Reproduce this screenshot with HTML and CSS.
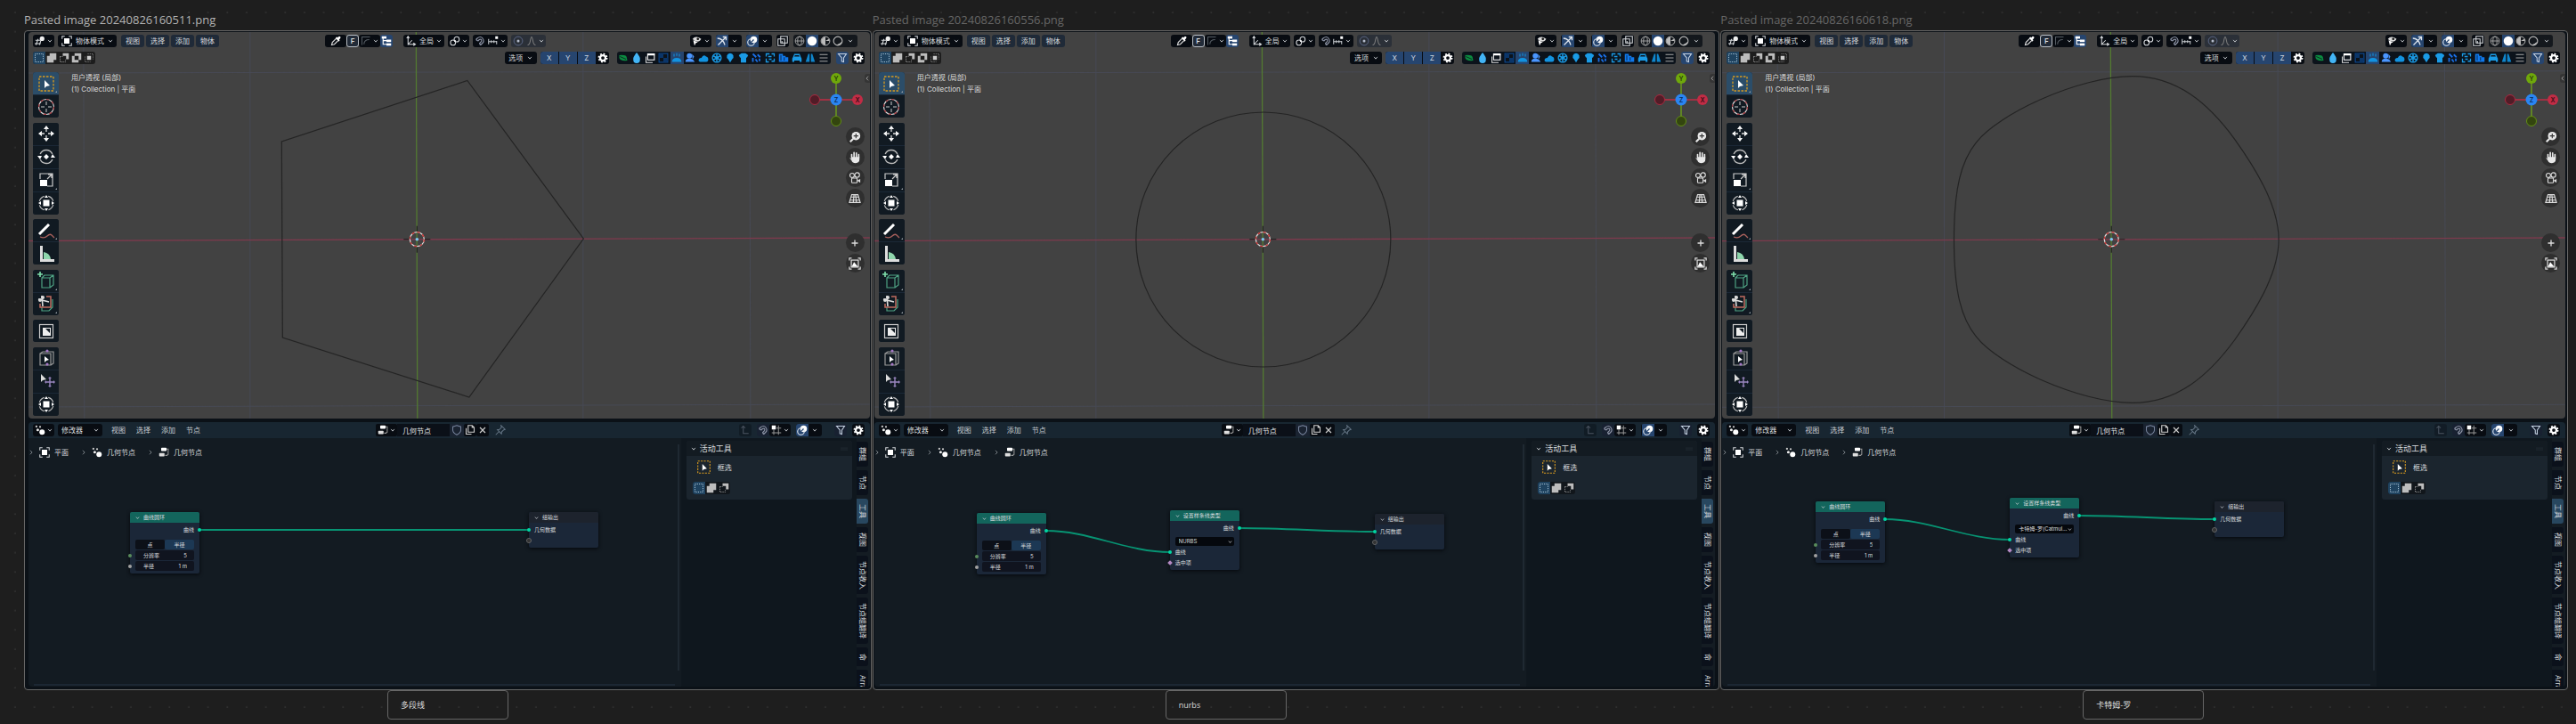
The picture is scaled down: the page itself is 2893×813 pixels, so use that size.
FILE: index.html
```html
<!DOCTYPE html>
<html lang="zh-CN">
<head>
<meta charset="utf-8">
<title>曲线类型</title>
<link rel="stylesheet" href="styles.css">
</head>
<body>
<svg class="dots" aria-hidden="true">
  <defs>
    <pattern id="dot-grid" width="65" height="65" patternUnits="userSpaceOnUse" patternTransform="translate(6 3) scale(.33333)">
      <circle cx="33" cy="33" r="2.6" fill="#353535"/>
    </pattern>
  </defs>
  <rect width="100%" height="100%" fill="url(#dot-grid)"/>
</svg>
<main class="board" id="board"></main>
<script src="app.js"></script>
</body>
</html>
```
FILE: styles.css
```css
* { box-sizing: border-box; }

body {
  margin: 0;
  min-height: 100vh;
  background: #1e1e1e;
  color: #d9dcdf;
  font: 8px/12px Inter, "Noto Sans CJK SC", sans-serif;
  overflow: hidden;
}

button, select, input {
  margin: 0;
  padding: 0;
  border: 0;
  background: none;
  color: inherit;
  font: inherit;
}
select { appearance: none; }
svg { display: block; }
.icon { width: 12px; height: 12px; flex: none; }
.icon.chev { width: 6px; height: 6px; }

.dots { position: absolute; inset: 0; width: 100%; height: 100%; }

/* board */
.board {
  position: relative;
  display: grid;
  grid-template-columns: repeat(3, minmax(0, 1fr));
  gap: 1px;
  padding: 12px 9px 0 27px;
}
.shot { display: flex; flex-direction: column; align-items: flex-start; }
.shot-title {
  margin: 0;
  height: 22px;
  color: #666;
  font: 13px/20px "Open Sans", sans-serif;
}
.shot-title.active { color: #b3b3b3; }
.frame {
  width: 100%;
  display: flex;
  flex-direction: column;
  gap: 4px;
  padding: 1px 2px 3px 1px;
  border: 1px solid #666;
  border-radius: 4px;
  background: #0b1117;
  overflow: hidden;
}
.frame.first { padding-left: 4px; padding-right: 1px; }
.frame.second { padding-right: 4px; }
.caption {
  width: 136px;
  height: 33px;
  padding: 0 14px;
  border: 1px solid #666;
  border-radius: 4px;
  color: #dadada;
  font: 9px/32px "Open Sans", "Noto Sans CJK SC", sans-serif;
}
.caption.first { margin-left: 408px; }
.caption.second { margin-left: 329px; }
.caption.third { margin-left: 407px; }

/* 3D viewport */
.viewport {
  position: relative;
  padding: 2px 0 3px;
  border-radius: 4px;
  background: #424242;
  overflow: hidden;
}
.scene { position: absolute; inset: 0; width: 100%; height: 100%; }
.bar { position: relative; display: flex; align-items: center; height: 15px; }
.bar + .bar { margin-top: 4px; }
.top-bar { padding: 0 14px 0 5px; }
.tool-bar { padding: 0 6px 0 5px; justify-content: space-between; }
.lead { display: flex; gap: 4px; flex: 0 0 328px; }
.middle { display: flex; gap: 4px; }
.trail { display: flex; gap: 5px; margin-left: auto; }
.menus { display: flex; gap: 2px; margin-left: 1px; }
.menu { width: 26px; height: 14px; border-radius: 3px; background: #1f2a38; }

.pill {
  display: flex;
  align-items: center;
  justify-content: space-evenly;
  height: 14px;
  border-radius: 3px;
  background: #080c12;
  overflow: hidden;
}
.w14 { width: 14px; }
.w24 { width: 24px; }
.w29 { width: 29px; }
.w36 { width: 36px; }
.w39 { width: 39px; }
.w46 { width: 46px; }
.w66 { width: 66px; }
.w50 { width: 50px; }
.pill.dim { background: #2b3038; color: #777; }
.on { background: #26456f; }
.cell { display: flex; align-items: center; justify-content: center; width: 14px; height: 14px; }
.pick { display: flex; align-items: center; justify-content: space-between; position: relative; }
.pick select { flex: 1; min-width: 0; height: 14px; line-height: 14px; }
.mode-pick { padding: 0 4px; gap: 4px; }
.set { display: flex; }
.set .pill { border-radius: 3px; }
.set .key { border: 1px solid #b9bec4; background: #222b38; font-weight: 600; }
.shade { width: 72px; background: #14181d; }
.gap-right { margin-right: 8px; }

.modes { display: flex; height: 14px; border-radius: 3px; background: #1d1d1d; overflow: hidden; }
.modes .cell.on { background: #1f4360; }
.axes { display: flex; height: 14px; border-radius: 3px; background: #080c12; overflow: hidden; }
.axes .axis { width: 20px; margin-right: 1px; background: #26456f; color: #d0d8e0; }
.filters { display: flex; height: 14px; border-radius: 3px; background: #0c131b; overflow: hidden; }
.filters .cell { width: 15px; }
.tool-group-right { display: flex; gap: 4px; align-items: center; }
.tool-group-right .filters { margin: 0 2px 0 5px; }

.stage { position: relative; display: flex; align-items: flex-start; min-height: 395px; padding: 9px 0 0 5px; }
.tools { display: flex; flex-direction: column; align-self: stretch; justify-content: space-between; }
.tool-set {
  display: flex;
  flex-direction: column;
  gap: 1px;
  border-radius: 3px;
  background: #1b2836;
  overflow: hidden;
}
.tool {
  position: relative;
  display: grid;
  place-items: center;
  width: 29px;
  height: 25px;
  background: #111a22;
}
.tool.on { background: #2b4d69; }
.tool .icon { width: 20px; height: 20px; }
.tool.more::after {
  content: "";
  position: absolute;
  right: 2px;
  bottom: 2px;
  border: 1px solid #9aa2a9;
  border-left-color: transparent;
  border-top-color: transparent;
}
.view-info {
  margin: 0 0 0 14px;
  color: #e2e2e2;
  line-height: 13px;
  text-shadow: 0 0 1px #222;
}
.view-info span { display: block; }
.gizmo { width: 62px; height: 62px; margin-right: 1px; }
.nav {
  display: flex;
  flex-direction: column;
  align-items: flex-end;
  margin-left: auto;
  padding-right: 6px;
}
.nav-set { display: flex; flex-direction: column; gap: 2px; }
.nav-set + .nav-set { margin-top: 29px; }
.round {
  display: grid;
  place-items: center;
  width: 21px;
  height: 21px;
  border-radius: 50%;
  background: #2f2f2f;
}
.round .icon { width: 14px; height: 14px; }
.collapse {
  position: absolute;
  top: 11px;
  right: 0;
  width: 6px;
  height: 10px;
  border-radius: 3px 0 0 3px;
  background: #353535;
}
.collapse .icon { width: 6px; height: 8px; }

/* node editor */
.editor { border-radius: 4px; background: #131b22; overflow: hidden; }
.editor-bar { display: flex; align-items: center; height: 18px; padding: 0 6px 0 5px; background: #182631; }
.editor-bar .trail { gap: 6px; }
.editor-lead { display: flex; align-items: center; gap: 4px; flex: 0 0 385px; }
.editor-menus { display: flex; gap: 2px; margin-left: 1px; }
.editor-menus button { width: 26px; height: 14px; color: #c8cdd2; }
.datablock { display: flex; }
.datablock .pill { border-radius: 2px; }
.datablock input { width: 59px; height: 14px; padding-left: 6px; background: #0b1018; color: #e4e6e8; }
.datablock .soft { width: 16px; background: #1a2331; }
.faint { opacity: .35; }
.bare { background: #182131; }
.filter { margin-left: 8px; }
.pin { margin-left: 6px; background: none; }
.editor-body { display: flex; height: 279px; }
.graph { position: relative; flex: 1; min-width: 0; }
.crumbs { position: relative; display: flex; align-items: center; gap: 6px; height: 32px; padding: 0; }
.crumbs .chev { opacity: .8; }
.crumbs .crumb { display: flex; align-items: center; gap: 5px; margin-right: 8px; color: #d5d8db; text-decoration: none; }
.links { position: absolute; inset: 0; width: 100%; height: 100%; }
.scroll-y { position: absolute; right: 2px; top: 7px; bottom: 18px; width: 2px; background: #1f2932; }
.scroll-x { position: absolute; left: 6px; right: 7px; bottom: 1px; height: 2px; background: #1c2733; }

.node {
  position: absolute;
  width: 78px;
  border-radius: 2px;
  background: #1b2738;
  box-shadow: 0 1px 4px #05080c;
  font-size: 6px;
  line-height: 12px;
}
.node-head {
  display: flex;
  align-items: center;
  gap: 4px;
  height: 12px;
  margin: 0 0 2px;
  padding-left: 6px;
  border-radius: 2px 2px 0 0;
  background: #13655c;
  font-size: 6px;
  font-weight: 400;
}
.node-head .chev { width: 5px; height: 5px; }
.output .node-head { background: #1d232d; }
.row { position: relative; height: 12px; padding: 0 6px; }
.row.right { text-align: right; }
.socket {
  position: absolute;
  top: 4px;
  width: 4px;
  height: 4px;
  border-radius: 50%;
  background: #00d6a3;
}
.socket.in { left: -2px; }
.socket.out { right: -2px; }
.socket.int { background: #598c5c; }
.socket.float { background: #a1a1a1; }
.socket.bool { background: #b48ac4; border-radius: 0; transform: rotate(45deg); }
.socket.empty { background: #333; outline: 1px solid #666; }
.fields { display: flex; flex-direction: column; gap: 1px; padding: 5px 6px 3px; }
.segment { display: flex; }
.segment button { flex: 1; height: 11px; background: #0c1018; border-radius: 2px; }
.segment .on { background: #1c3854; }
.field {
  position: relative;
  display: flex;
  justify-content: space-between;
  height: 11px;
  padding: 0 8px 0 9px;
  border-radius: 2px;
  background: #10141f;
  line-height: 11px;
}
.field input { width: 20px; text-align: right; }
.field .socket.in { left: -8px; }
.choice {
  display: flex;
  align-items: center;
  height: 10px;
  margin: 4px 6px 1px;
  padding: 0 2px 0 4px;
  border-radius: 2px;
  background: #05080d;
}
.choice select { flex: 1; min-width: 0; height: 10px; line-height: 10px; text-overflow: ellipsis; }
.choice .chev { width: 5px; height: 5px; }
.node-end { height: 2px; }

.sidebar { display: flex; width: 212px; background: #0f171e; }
.panel { flex: 1; margin: 3px 5px 0 6px; }
.panel-card { border-radius: 3px; background: #1b252e; overflow: hidden; }
.panel-head {
  display: flex;
  align-items: center;
  gap: 4px;
  height: 17px;
  margin: 0;
  padding: 0 5px;
  background: #131b22;
  font-size: 9px;
  font-weight: 400;
}
.panel-head .grip { width: 8px; margin-left: auto; }
.panel-body { padding: 4px 7px 6px; }
.active-tool { display: flex; align-items: center; gap: 7px; padding-left: 4px; }
.active-tool .icon { width: 17px; height: 17px; }
.panel-body .modes { width: 42px; margin-top: 8px; background: #11161b; }
.tabs { display: flex; flex-direction: column; gap: 4px; width: 15px; padding: 4px 2px 0 0; background: #141c23; overflow: hidden; }
.tab {
  flex: none;
  width: 13px;
  height: 28px;
  border-radius: 0 3px 3px 0;
  background: #0b111b;
  line-height: 13px;
  writing-mode: vertical-rl;
  text-orientation: sideways;
  text-align: center;
}
.tab.on { background: #28475f; }
.tab.h43 { height: 43px; }
.tab.h52 { height: 52px; }
.tab.h21 { height: 21px; }
```
FILE: app.js
```js
const W = 'fill="none" stroke="#d5d8db" stroke-width="1.4"';
const ICONS = {
  chev: '<path d="M3 5l5 6 5-6" fill="none" stroke="#c9cdd1" stroke-width="2.4"/>',
  next: '<path d="M5 2l6 6-6 6" fill="none" stroke="#c9cdd1" stroke-width="2"/>',
  back: '<path d="M11 2L5 8l6 6" fill="none" stroke="#bbb" stroke-width="2"/>',
  view3d: `<path d="M1 7h8M0 12h9M5 5l-3 9M9 8l-2 6" ${W}/><circle cx="11" cy="4.500" r="3.500" fill="#eee"/>`,
  object: `<path d="M1 5V1h4M11 1h4v4M15 11v4h-4M5 15H1v-4" ${W}/><rect x="4" y="4" width="8" height="8" fill="#fff"/>`,
  dropper: '<path d="M2 14l1-4 6-6 3 3-6 6z" fill="none" stroke="#ddd" stroke-width="1.5"/><path d="M8 3l2-1 1 1 2-2q3 0 2 3l-2 2 1 1-1 2z" fill="#fff"/>',
  corner: '<path d="M2 14V2h12M5 13q0-7 8-7" fill="none" stroke="#555c63" stroke-width="1.4"/>',
  tree: '<path d="M3 4v9h5M3 7.500h5" fill="none" stroke="#fff" stroke-width="1.500"/><rect x="1" y="1" width="7" height="3.500" fill="#fff"/><rect x="8" y="6" width="7" height="3.500" fill="#fff"/><rect x="8" y="11.500" width="7" height="3.500" fill="#fff"/>',
  orient: `<path d="M3 14V2M1 4l2-3 2 3M3 13h10M11 11l3 2-3 2M3 13l6-6" ${W}/>`,
  link: `<circle cx="5" cy="10.500" r="3.800" ${W}/><circle cx="10.500" cy="5.500" r="3.800" ${W}/><circle cx="8" cy="8" r="1.200" fill="#fff"/>`,
  magnet: '<path d="M2 6l2-2q5-4 8 0t0 7l-3 3M5 8l2-2q2-1 3 0t0 3l-3 3M9 14l-2-2M2 6l3 2" fill="none" stroke="#8c93a5" stroke-width="1.500"/>',
  ruler: '<path d="M1 5v8M5 7v4M9 7v4M1 9h12M13 8v5" fill="none" stroke="#c9cdd1" stroke-width="1.400"/><rect x="11" y="1" width="4" height="4" fill="#fff"/>',
  prop: '<circle cx="8" cy="8" r="6.500" fill="none" stroke="#5b6785" stroke-width="1.300"/><circle cx="8" cy="8" r="2" fill="#b5bccb"/>',
  bell: '<path d="M2 14q3 0 4-6t2-6 2 6 4 6" fill="none" stroke="#7d7d7d" stroke-width="1.400"/>',
  eye: '<path d="M1 5q5-6 13 0-2 4-6 4T1 5z" fill="#ddd"/><circle cx="9" cy="5" r="1.800" fill="#111"/><path d="M2 7l7 3-3 1-2 4z" fill="#fff"/>',
  gizmo: '<path d="M2 14L13 3M9 2h5v5M1 4q8 0 11 10" fill="none" stroke="#dfe6ee" stroke-width="1.700"/>',
  overlay: '<circle cx="10" cy="6" r="5" fill="#fff"/><circle cx="6" cy="10" r="5" fill="none" stroke="#dfe6ee" stroke-width="1.500"/><path d="M6 10l4-4" stroke="#26456f" stroke-width="1.500"/>',
  xray: `<path d="M5 1h10v10H5zM1 5h10v10H1zM7 8v4" ${W}/>`,
  wire: '<g fill="none" stroke="#aaa" stroke-width="1.200"><circle cx="8" cy="8" r="6.500"/><ellipse cx="8" cy="8" rx="3" ry="6.500"/><path d="M1.500 8h13"/></g>',
  solid: '<circle cx="8" cy="8" r="7" fill="#fff"/>',
  matp: '<circle cx="8" cy="8" r="6.500" fill="none" stroke="#bbb" stroke-width="1.300"/><path d="M8 2a6 6 0 0 0 0 12V8h6a6 6 0 0 0-1-3L8 8z" fill="#bbb"/>',
  rend: '<circle cx="8" cy="8" r="6.500" fill="none" stroke="#bbb" stroke-width="1.500"/><path d="M13 10q-1 4-6 4 5-2 6-4z" fill="#ccc" stroke="#bbb"/>',
  mnew: '<rect x="2" y="2" width="12" height="12" fill="none" stroke="#a9c4d8" stroke-width="1.300" stroke-dasharray="1.500 1.500"/>',
  madd: '<path d="M5 1h10v10h-4v4H1V5h4z" fill="#bdbdbd"/>',
  msub: '<path d="M6 1h9v9h-4V5H6z" fill="#bdbdbd"/><path d="M2 6v8h8v-3M2 6h4" fill="none" stroke="#aaa" stroke-width="1.200" stroke-dasharray="1.500 1.500"/>',
  minv: '<path d="M5 1h10v10h-4v4H1V5h4z" fill="#bdbdbd"/><rect x="5" y="5" width="6" height="6" fill="#1d1d1d"/>',
  mand: '<path d="M6 2h8v8M2 6v8h8" fill="none" stroke="#888" stroke-width="1.200" stroke-dasharray="1.500 1.500"/><rect x="5" y="5" width="6" height="6" fill="#ccc"/>',
  gear: '<circle cx="8" cy="8" r="4" fill="none" stroke="#fff" stroke-width="3"/><circle cx="8" cy="8" r="6" fill="none" stroke="#fff" stroke-width="2.600" stroke-dasharray="2.400 2.312"/>',
  funnel: '<path d="M2 2h12L10 8v6l-3-1V8z" fill="none" stroke="#c7d4e4" stroke-width="1.400"/>',
  leaf: '<path d="M2 4q10-1 11 3l1 5q-11 1-12-4z" fill="#0b8a40"/><path d="M3 6l9 4" stroke="#0c131b"/>',
  drop: '<path d="M8 0q6 7 5 11a5 5 0 0 1-10 0Q2 7 8 0z" fill="#42b4f5"/>',
  layers: '<path d="M2 6v9h10" fill="none" stroke="#ddd" stroke-width="1.400"/><rect x="4.500" y="2" width="10" height="9" fill="none" stroke="#fff" stroke-width="1.400"/><path d="M4 3h11" stroke="#fff" stroke-width="2.500"/>',
  check: '<rect x="1.500" y="1.500" width="13" height="13" fill="none" stroke="#0a4c9a" stroke-width="1.400"/><path d="M2 2h6v6H2zM8 8h6v6H8z" fill="#0b3568"/>',
  steam: '<path d="M1 14q0-6 7-6t7 6z" fill="#1293e0"/><path d="M4 2v4M8 1v4M12 2v4" stroke="#1293e0" stroke-width="1.400"/>',
  person: '<circle cx="7" cy="5" r="4" fill="#4a96ff"/><path d="M1 14q0-5 6-5t6 5zM11 2l3 4-2 4 3 4h-3" fill="#4a96ff"/>',
  cloud: '<path d="M1 13q-1-5 4-5 3-6 7-2 4 1 3 6-1 2-3 2H3z" fill="#1293e0"/>',
  reel: '<circle cx="8" cy="8" r="6.500" fill="none" stroke="#1a9be6" stroke-width="1.800"/><path d="M8 2v12M3 5l10 6M3 11l10-6" stroke="#1a9be6" stroke-width="2"/>',
  bulb: '<path d="M8 1a5 5 0 0 1 3 9l-3 5-3-5a5 5 0 0 1 3-9z" fill="#1a9be6"/>',
  shirt: '<path d="M1 4l4-3h6l4 3-2 4-1-1v8H4V7L3 8z" fill="#1a9be6"/>',
  bits: '<path d="M2 2l5 5M9 3l4 4M2 8v6M6 10l3 4M12 9v4" stroke="#1a6fe6" stroke-width="2.400"/>',
  frags: '<path d="M2 6V2h5M10 2h4v4M14 9v4h-4M6 14H2V9M5 6h5M6 10h4" fill="none" stroke="#1a9be6" stroke-width="1.700"/>',
  bldg: '<path d="M1 14V2h6v3h4v2h4v7z" fill="#0f78ea"/><path d="M4 4v8M9 7v5" stroke="#0c131b"/>',
  car: '<path d="M2 7l2-5h8l2 5 1 2v5h-3v-2H4v2H1V9z" fill="#1a9be6"/><path d="M4 6l1-2h6l1 2z" fill="#0c131b"/>',
  road: '<path d="M5 2h2v12H1zM9 2h2l4 12H9z" fill="#0f86cc"/>',
  lines: '<path d="M2 3h12M2 8h12M2 13h12" stroke="#aaa" stroke-width="1.300"/>',
  selbox: '<rect x="2" y="2" width="16" height="16" fill="none" stroke="#d79a20" stroke-width="1.300" stroke-dasharray="2.500 1.500"/><path d="M8 6v9l2-2 4-1z" fill="#fff"/>',
  cursor: '<circle cx="10" cy="10" r="8.500" fill="none" stroke="#ddd" stroke-width="1.200"/><circle cx="10" cy="10" r="8.500" fill="none" stroke="#a5393e" stroke-width="1.200" stroke-dasharray="3.300 3.300"/><path d="M10 4v4M10 12v4M4 10h4M12 10h4" stroke="#ccc"/>',
  move: '<path d="M10 1l3 4H7zM10 19l3-4H7zM1 10l4-3v6zM19 10l-4-3v6z" fill="#fff"/><path d="M10 4v4M10 12v4M4 10h4M12 10h4" stroke="#ddd" stroke-width="1.300"/>',
  rotate: '<circle cx="10" cy="10" r="7.500" fill="none" stroke="#bbb" stroke-width="1.400" stroke-dasharray="17 6.560" stroke-dashoffset="-3"/><path d="M10 7l3 3-3 3-3-3zM0 9h5l-2 4zM20 11h-5l2-4z" fill="#fff"/>',
  scale: '<path d="M3 9V3h14v14h-6M11 9l5-5M12 4h4v4" fill="none" stroke="#ccc" stroke-width="1.200"/><rect x="3" y="10" width="8" height="7" fill="#fff"/>',
  transform: '<circle cx="10" cy="10" r="8" fill="none" stroke="#bbb" stroke-width="1.200" stroke-dasharray="8 4.560" stroke-dashoffset="-2"/><rect x="6.500" y="6.500" width="7" height="7" fill="#fff"/><path d="M10 1l2 3H8zM10 19l2-3H8zM1 10l3-2v4zM19 10l-3-2v4z" fill="#fff"/>',
  pencil: '<path d="M2 14l11-11" stroke="#fff" stroke-width="3"/><path d="M3 17q5 2 8-1t5-1 3 3" fill="none" stroke="#a8605c" stroke-width="1.300"/>',
  measure: '<path d="M3 1h3v15h13v3H3z" fill="#ddd"/><path d="M7 8q7 1 8 8H7z" fill="#8fd6ac"/>',
  addcube: '<path d="M5 7h9v11H5zM5 7l3-3h10v11l-4 3M14 7l4-3" fill="none" stroke="#4fa384" stroke-width="1.200"/><path d="M3 0v6M0 3h6" stroke="#7fe0ac" stroke-width="1.600"/>',
  cutcube: '<path d="M17 5v9l-4 4H5v-4" fill="none" stroke="#4fa384" stroke-width="1.200"/><path d="M10 2h5v12H3v-4" fill="none" stroke="#c06c60" stroke-width="1.500"/><path d="M5 1l1 12M1 5l12 3" stroke="#ddd" stroke-width="1.600"/><circle cx="3" cy="6" r="2" fill="#ddd"/><circle cx="6" cy="3" r="2" fill="#ddd"/>',
  mirror: '<rect x="2.500" y="2.500" width="15" height="15" fill="none" stroke="#ccc" stroke-width="1.200"/><path d="M6 6h9v9H6z" fill="#eee"/><path d="M9 7h5v5z" fill="#111a22"/>',
  lattice: '<path d="M3 5h12v13H3zM3 5l3-2h12v13l-3 2" fill="none" stroke="#999" stroke-width="1.200"/><path d="M8 8v7l2-2 3-1z" fill="#fff"/><circle cx="11" cy="2" r="1.600" fill="#a678c8"/><circle cx="11" cy="17" r="1.600" fill="#a678c8"/>',
  tweak: '<path d="M4 2v9l2-2 4-1z" fill="#ddd"/><path d="M14 6v9M9 11h10" stroke="#9a86c0" stroke-width="1.400"/><path d="M14 5l2 2h-4zM14 17l2-2h-4zM8 11l2-2v4zM20 11l-2-2v4z" fill="#9a86c0"/>',
  zoom: '<circle cx="9.500" cy="6.500" r="5.500" fill="#e8e8e8"/><path d="M6 10l-4 4" stroke="#e8e8e8" stroke-width="2.400"/><path d="M9.500 3.500v6M6.500 6.500h6" stroke="#333" stroke-width="1.300"/>',
  hand: '<path d="M4 9V4M7 8V1.500M10 8V2M13 8V4" stroke="#e8e8e8" stroke-width="1.900" stroke-linecap="round"/><path d="M1 8l3 2V7h10v3q0 5-5 5-4 0-5-3z" fill="#e8e8e8"/>',
  camera: '<circle cx="4.500" cy="4.500" r="2.800" fill="none" stroke="#ddd" stroke-width="1.300"/><circle cx="11" cy="4" r="3" fill="none" stroke="#ddd" stroke-width="1.300"/><rect x="4" y="8" width="7" height="6" rx="1" fill="none" stroke="#ddd" stroke-width="1.300"/><path d="M11 11l4-2v5z" fill="#ddd"/>',
  persp: '<path d="M4 3h8l3 10H1zM3 6h10M2 10h12M7 3L6 13M9 3l1 10" fill="none" stroke="#ddd" stroke-width="1.300"/>',
  plus: '<path d="M8 4v8M4 8h8" stroke="#ddd" stroke-width="1.500"/>',
  frame: '<path d="M1 4V1h3M12 1h3v3M15 12v3h-3M4 15H1v-3" fill="none" stroke="#ddd" stroke-width="1.400"/><rect x="3.500" y="3.500" width="9" height="9" fill="none" stroke="#ddd" stroke-width="1.400"/><path d="M4 12l3-6 5 6z" fill="#fff"/>',
  geo: '<circle cx="11" cy="11" r="4" fill="#fff"/><circle cx="2.500" cy="2.500" r="1.500" fill="#ccc"/><circle cx="8" cy="3" r="1.500" fill="#ccc"/><circle cx="4.500" cy="7.500" r="2" fill="#eee"/>',
  group: '<rect x="4" y="1" width="8" height="5" rx="1" fill="#fff"/><rect x="1" y="9" width="8" height="5" rx="1" fill="#ddd"/><path d="M12 3h2.500v8l-2 1.500H10" fill="none" stroke="#999" stroke-width="1.400"/>',
  shield: '<path d="M8 1l6 2v5q0 4-6 7-6-3-6-7V3z" fill="none" stroke="#76839b" stroke-width="1.400"/>',
  copy: '<path d="M5 1h6l3 3v7H5zM2 5v9h8M11 1v3h3" fill="none" stroke="#ccc" stroke-width="1.500"/>',
  close: '<path d="M4 4l8 8M12 4l-8 8" stroke="#ccc" stroke-width="1.600"/>',
  pin: '<path d="M9 1l6 6-2 .500-3 3-.500 3-6-6 3-.500 3-3zM6 10l-5 5" fill="none" stroke="#657585" stroke-width="1.400"/>',
  up: '<path d="M5 2v11h8M2 5l3-3 3 3" fill="none" stroke="#aab" stroke-width="1.400"/>',
  grid: '<path d="M4 7v8M11 1v14M1 12h14M8 5h7" fill="none" stroke="#999" stroke-width="1.300"/><rect x="1" y="1" width="6" height="6" fill="#fff"/>',
  grip: '<g fill="#36424c"><circle cx="2" cy="6" r="1"/><circle cx="6" cy="6" r="1"/><circle cx="10" cy="6" r="1"/><circle cx="14" cy="6" r="1"/><circle cx="2" cy="10" r="1"/><circle cx="6" cy="10" r="1"/><circle cx="10" cy="10" r="1"/><circle cx="14" cy="10" r="1"/></g>'
};
const BIG = ['selbox', 'cursor', 'move', 'rotate', 'scale', 'transform', 'pencil', 'measure', 'addcube', 'cutcube', 'mirror', 'lattice', 'tweak'];

const icon = (name, cls = '') => {
  const size = BIG.includes(name) ? 20 : 16;
  return `<svg class="icon ${cls}" viewBox="0 0 ${size} ${size}" aria-hidden="true">${ICONS[name]}</svg>`;
};
const chev = () => icon('chev', 'chev');
const pill = (cls, ...names) =>
  `<button class="pill ${cls}" aria-label="${names[0]}">${names.map(n => (n === 'chev' ? chev() : icon(n))).join('')}</button>`;
const cell = (name, cls = '') => `<button class="cell ${cls}" aria-label="${name}">${icon(name)}</button>`;
const menu = labels => labels.map(l => `<button class="menu">${l}</button>`).join('');
const toolSet = (...names) => `<div class="tool-set">${names.map(n => {
  const [name, flag] = n.split(':');
  return `<button class="tool ${name === 'selbox' ? 'on' : ''} ${flag || ''}" aria-label="${name}">${icon(name)}</button>`;
}).join('')}</div>`;

const scene = shape => `
<svg class="scene" viewBox="0 0 945 434" preserveAspectRatio="xMidYMid slice" aria-hidden="true">
  <path d="M62 0l1 434M249 0v434M623 0v434M810 0l1 434M0 46l945-2M0 421l945-3" stroke="#474a55" fill="none"/>
  <path d="M0 234.500L945 231" stroke="#7d3a4d" stroke-width="1.300"/>
  <path d="M435.500 0L437 434" stroke="#537a31" stroke-width="1.300"/>
  <g fill="none" stroke="#242424" stroke-width="1.200">${shape}</g>
  <g transform="translate(436.500 232.700)">
    <path d="M-15 0h8M7 0h8M0-15v8M0 7v8" stroke="#222" stroke-width="1.200"/>
    <circle r="8" fill="none" stroke="#ddd" stroke-width="1.300"/>
    <circle r="8" fill="none" stroke="#c83232" stroke-width="1.300" stroke-dasharray="3.140 3.140"/>
    <circle r="1.800" fill="#7cc8f0"/>
  </g>
</svg>`;

const gizmo = `
<svg class="gizmo" viewBox="0 0 62 62" role="img" aria-label="视图方向" font-size="7" font-weight="600" text-anchor="middle">
  <path d="M31 7v48" stroke="#6b9b1c" stroke-width="1.500"/><path d="M7 31h48" stroke="#c12c45" stroke-width="1.500"/>
  <circle cx="31" cy="7" r="6" fill="#6fa80b"/><circle cx="31" cy="55" r="5.500" fill="#33450f" stroke="#628d16"/>
  <circle cx="7" cy="31" r="5.500" fill="#511c27" stroke="#a92a40"/><circle cx="55" cy="31" r="6" fill="#c12c45"/>
  <circle cx="31" cy="31" r="6.500" fill="#2a85f2"/>
  <text x="31" y="9.500" fill="#26390b">Y</text><text x="55" y="33.500" fill="#3c0f18">X</text><text x="31" y="33.500" fill="#0c2b52">Z</text>
</svg>`;

const viewport = shape => `
<section class="viewport">
  ${scene(shape)}
  <header class="bar top-bar">
    <div class="lead">
      ${pill('w24', 'view3d', 'chev')}
      <div class="pill pick mode-pick w66">${icon('object')}<select aria-label="模式"><option>物体模式</option></select>${chev()}</div>
      <div class="menus">${menu(['视图', '选择', '添加', '物体'])}</div>
    </div>
    <div class="middle">
      <div class="set gap-right">${pill('w24', 'dropper')}<button class="pill w14 key">F</button>${pill('w24', 'corner', 'chev')}${pill('w14 on', 'tree')}</div>
      <button class="pill w46">${icon('orient')}<span>全局</span>${chev()}</button>
      ${pill('w24', 'link', 'chev')}
      ${pill('w39', 'magnet', 'ruler', 'chev')}
      ${pill('w39 dim', 'prop', 'bell', 'chev')}
    </div>
    <div class="trail">
      ${pill('w24', 'eye', 'chev')}
      <div class="pill w29">${cell('gizmo', 'on')}<button class="cell" aria-label="坐标轴选项">${chev()}</button></div>
      <div class="pill w29">${cell('overlay', 'on')}<button class="cell" aria-label="叠加层选项">${chev()}</button></div>
      ${pill('w14', 'xray')}
      <div class="pill shade">${cell('wire')}${cell('solid', 'on')}${cell('matp')}${cell('rend')}<button class="cell" aria-label="着色选项">${chev()}</button></div>
    </div>
  </header>
  <div class="bar tool-bar">
    <div class="modes">${cell('mnew', 'on')}${['madd', 'msub', 'minv', 'mand'].map(n => cell(n)).join('')}</div>
    <div class="tool-group-right">
      <button class="pill w36"><span>选项</span>${chev()}</button>
      <div class="axes"><button class="axis">X</button><button class="axis">Y</button><button class="axis">Z</button>${cell('gear')}</div>
      <div class="filters">${['leaf', 'drop', 'layers', 'check', 'steam', 'person', 'cloud', 'reel', 'bulb', 'shirt', 'bits', 'frags', 'bldg', 'car', 'road', 'lines'].map(n => cell(n, n === 'steam' ? 'on' : '')).join('')}</div>
      ${pill('w14 on', 'funnel')}
      ${pill('w14', 'gear')}
    </div>
  </div>
  <div class="stage">
    <div class="tools">
      ${toolSet('selbox:more', 'cursor')}
      ${toolSet('move', 'rotate', 'scale:more', 'transform')}
      ${toolSet('pencil:more', 'measure')}
      ${toolSet('addcube:more', 'cutcube:more')}
      ${toolSet('mirror')}
      ${toolSet('lattice', 'tweak', 'transform')}
    </div>
    <p class="view-info"><span>用户透视 (局部)</span><span>(1) Collection | 平面</span></p>
    <div class="nav">
      ${gizmo}
      <div class="nav-set">${['zoom', 'hand', 'camera', 'persp'].map(n => `<button class="round" aria-label="${n}">${icon(n)}</button>`).join('')}</div>
      <div class="nav-set">${['plus', 'frame'].map(n => `<button class="round" aria-label="${n}">${icon(n)}</button>`).join('')}</div>
    </div>
    <button class="collapse" aria-label="侧栏">${icon('back')}</button>
  </div>
</section>`;

const at = ([x, y]) => `style="left:${x}px;top:${y}px"`;
const head = title => `<h3 class="node-head">${chev()}${title}</h3>`;

const circleNode = pos => `
<article class="node" ${at(pos)}>${head('曲线圆环')}
  <div class="row right">曲线<i class="socket out"></i></div>
  <div class="fields">
    <div class="segment"><button>点</button><button class="on">半径</button></div>
    <label class="field"><i class="socket in int"></i>分辨率<input value="5"></label>
    <label class="field"><i class="socket in float"></i>半径<input value="1 m"></label>
  </div>
</article>`;

const typeNode = (pos, type) => `
<article class="node" ${at(pos)}>${head('设置样条线类型')}
  <div class="row right">曲线<i class="socket out"></i></div>
  <div class="choice"><select aria-label="样条线类型"><option>${type}</option></select>${chev()}</div>
  <div class="row"><i class="socket in"></i>曲线</div>
  <div class="row"><i class="socket in bool"></i>选中项</div>
  <div class="node-end"></div>
</article>`;

const outputNode = pos => `
<article class="node output" ${at(pos)}>${head('组输出')}
  <div class="row"><i class="socket in"></i>几何数据</div>
  <div class="row"><i class="socket in empty"></i></div>
  <div class="node-end"></div>
</article>`;

const wire = (x1, y1, x2, y2) => {
  const d = (x2 - x1) * 0.35;
  return `<path d="M${x1} ${y1}C${x1 + d} ${y1} ${x2 - d} ${y2} ${x2} ${y2}"/>`;
};

const graph = ({ circle, type, output, typeName }) => {
  const start = [circle[0] + 78, circle[1] + 20];
  const end = [output[0], output[1] + 20];
  const wires = type
    ? wire(...start, type[0], type[1] + 47) + wire(type[0] + 78, type[1] + 20, ...end)
    : wire(...start, ...end);
  return `
  <svg class="links" fill="none" stroke="#079473" stroke-width="1.800" aria-hidden="true">${wires}</svg>
  ${circleNode(circle)}${type ? typeNode(type, typeName) : ''}${outputNode(output)}`;
};

const editor = data => `
<section class="editor">
  <header class="editor-bar">
    <div class="editor-lead">
      ${pill('w24', 'geo', 'chev')}
      <div class="pill pick mode-pick w50"><select aria-label="节点树类型"><option>修改器</option></select>${chev()}</div>
      <div class="editor-menus"><button>视图</button><button>选择</button><button>添加</button><button>节点</button></div>
    </div>
    <div class="datablock">
      ${pill('w24', 'group', 'chev')}<input aria-label="节点组名称" value="几何节点">${pill('soft', 'shield')}${pill('w14', 'copy')}${pill('w14', 'close')}${pill('w14 pin', 'pin')}
    </div>
    <div class="trail">
      <button class="pill w14 faint" aria-label="上一级">${icon('up')}</button>
      <div class="set">${pill('w14 bare', 'magnet')}${pill('w24', 'grid', 'chev')}</div>
      <div class="pill w29">${cell('overlay', 'on')}<button class="cell" aria-label="叠加层选项">${chev()}</button></div>
      <button class="pill w14 bare filter" aria-label="过滤">${icon('funnel')}</button>
      ${pill('w14', 'gear')}
    </div>
  </header>
  <div class="editor-body">
    <div class="graph">
      <nav class="crumbs" aria-label="路径">
        ${icon('next', 'chev')}
        <a class="crumb" href="#">${icon('object')}平面</a>${icon('next', 'chev')}
        <a class="crumb" href="#">${icon('geo')}几何节点</a>${icon('next', 'chev')}
        <a class="crumb" href="#">${icon('group')}几何节点</a>
      </nav>
      ${graph(data)}
      <i class="scroll-y"></i><i class="scroll-x"></i>
    </div>
    <aside class="sidebar">
      <div class="panel"><div class="panel-card">
        <h2 class="panel-head">${icon('chev', 'chev')}活动工具${icon('grip', 'grip')}</h2>
        <div class="panel-body">
          <div class="active-tool">${icon('selbox')}<span>框选</span></div>
          <div class="modes">${cell('mnew', 'on')}${cell('madd')}${cell('msub')}</div>
        </div>
      </div></div>
      <div class="tabs">
        <button class="tab">群组</button><button class="tab">节点</button><button class="tab on">工具</button><button class="tab">视图</button>
        <button class="tab h43">节点收入</button><button class="tab h52">节点组翻译</button><button class="tab h21">命</button><button class="tab">Arra</button>
      </div>
    </aside>
  </div>
</section>`;

const SHOTS = [
  {
    place: 'first', file: 'Pasted image 20240826160511.png', caption: '多段线',
    shape: '<path d="M284.500 123L285.500 343 495 410 623.500 232 493 54.500z"/>',
    nodes: { circle: [114, 83], output: [562, 83] }
  },
  {
    place: 'second', file: 'Pasted image 20240826160556.png', caption: 'nurbs',
    shape: '<circle cx="437" cy="233" r="143"/>',
    nodes: { circle: [115, 84], type: [332, 81], output: [562, 85], typeName: 'NURBS' }
  },
  {
    place: 'third', file: 'Pasted image 20240826160618.png', caption: '卡特姆-罗',
    shape: '<path d="M260 233C260 175 268 145 285 124 310 92 400 50 460 50 510 50 545 80 575 121 605 163 624 200 624 233 624 266 605 303 575 345 545 386 510 416 460 416 400 416 310 374 285 342 268 321 260 291 260 233z"/>',
    nodes: { circle: [105, 71], type: [323, 67], output: [553, 71], typeName: '卡特姆-罗(Catmull-Rom)' }
  }
];

document.getElementById('board').innerHTML = SHOTS.map(s => `
<article class="shot">
  <h1 class="shot-title ${s.place === 'first' ? 'active' : ''}">${s.file}</h1>
  <div class="frame ${s.place}">${viewport(s.shape)}${editor(s.nodes)}</div>
  <div class="caption ${s.place}">${s.caption}</div>
</article>`).join('');
```
